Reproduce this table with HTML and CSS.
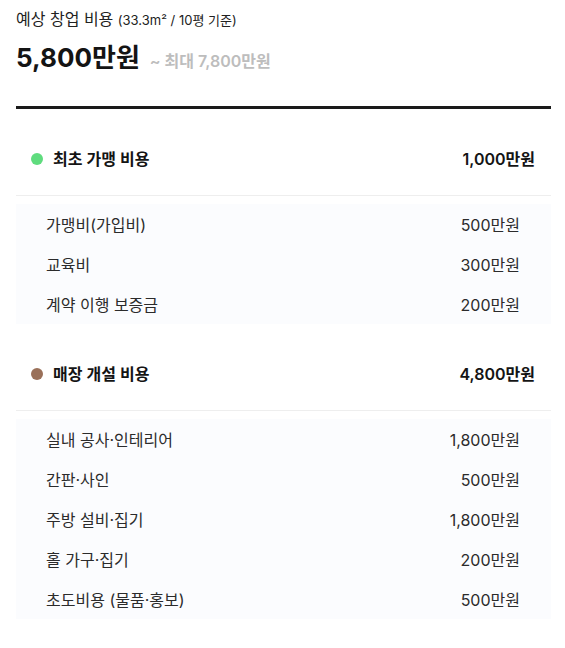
FILE: index.html
```html
<!DOCTYPE html>
<html lang="ko">
<head>
<meta charset="utf-8">
<link rel="stylesheet" href="styles.css">
</head>
<body>
<div class="page">
  <div class="summary">
    <div class="label">예상 창업 비용 <span class="sub">(33.3m² / 10평 기준)</span></div>
    <div class="total"><span class="amount">5,800만원</span><span class="max">~ 최대 7,800만원</span></div>
  </div>
  <div class="section">
    <div class="sec-head">
      <span class="dot green"></span>
      <span class="sec-title">최초 가맹 비용</span>
      <span class="sec-value">1,000만원</span>
    </div>
    <ul class="items">
      <li class="item"><span>가맹비(가입비)</span><span>500만원</span></li>
      <li class="item"><span>교육비</span><span>300만원</span></li>
      <li class="item"><span>계약 이행 보증금</span><span>200만원</span></li>
    </ul>
  </div>
  <div class="section">
    <div class="sec-head">
      <span class="dot brown"></span>
      <span class="sec-title">매장 개설 비용</span>
      <span class="sec-value">4,800만원</span>
    </div>
    <ul class="items">
      <li class="item"><span>실내 공사·인테리어</span><span>1,800만원</span></li>
      <li class="item"><span>간판·사인</span><span>500만원</span></li>
      <li class="item"><span>주방 설비·집기</span><span>1,800만원</span></li>
      <li class="item"><span>홀 가구·집기</span><span>200만원</span></li>
      <li class="item"><span>초도비용 (물품·홍보)</span><span>500만원</span></li>
    </ul>
  </div>
</div>
</body>
</html>
```

FILE: styles.css
```css
* { box-sizing: border-box; }
body {
  margin: 0;
  background: #fff;
  font-family: Inter, "Noto Sans CJK KR", sans-serif;
  color: #1a1a1a;
}
.page {
  padding: 8px 14px 0 16px;
}
.summary {
  border-bottom: 3px solid #1a1a1a;
  padding-bottom: 33px;
}
.label {
  font-size: 16px;
  line-height: 22px;
  color: #222;
}
.sub {
  font-size: 13px;
}
.total {
  margin-top: 12px;
  display: flex;
  align-items: baseline;
  gap: 10px;
}
.amount {
  font-size: 26px;
  font-weight: 700;
  line-height: 30px;
  color: #141414;
}
.max {
  font-size: 16px;
  font-weight: 600;
  color: #bdbdbd;
}
.section {
  margin-top: 14px;
}
.sec-head {
  display: flex;
  align-items: center;
  padding: 25px 16px 25px 15px;
  border-bottom: 1px solid #eeeeee;
  line-height: 22px;
}
.dot {
  width: 12px;
  height: 12px;
  border-radius: 50%;
  margin-right: 10px;
}
.green { background: #5fdc7e; }
.brown { background: #9a7059; }
.sec-title {
  flex: 1;
  font-size: 16px;
  font-weight: 600;
  color: #141414;
}
.sec-value {
  font-size: 16px;
  font-weight: 600;
  color: #141414;
}
.items {
  list-style: none;
  margin: 8px 0 0;
  padding: 0;
  background: #fbfcfe;
}
.item {
  display: flex;
  justify-content: space-between;
  align-items: center;
  height: 40px;
  padding: 0 31px 0 30px;
  font-size: 16px;
  color: #2b2b2b;
}
```
